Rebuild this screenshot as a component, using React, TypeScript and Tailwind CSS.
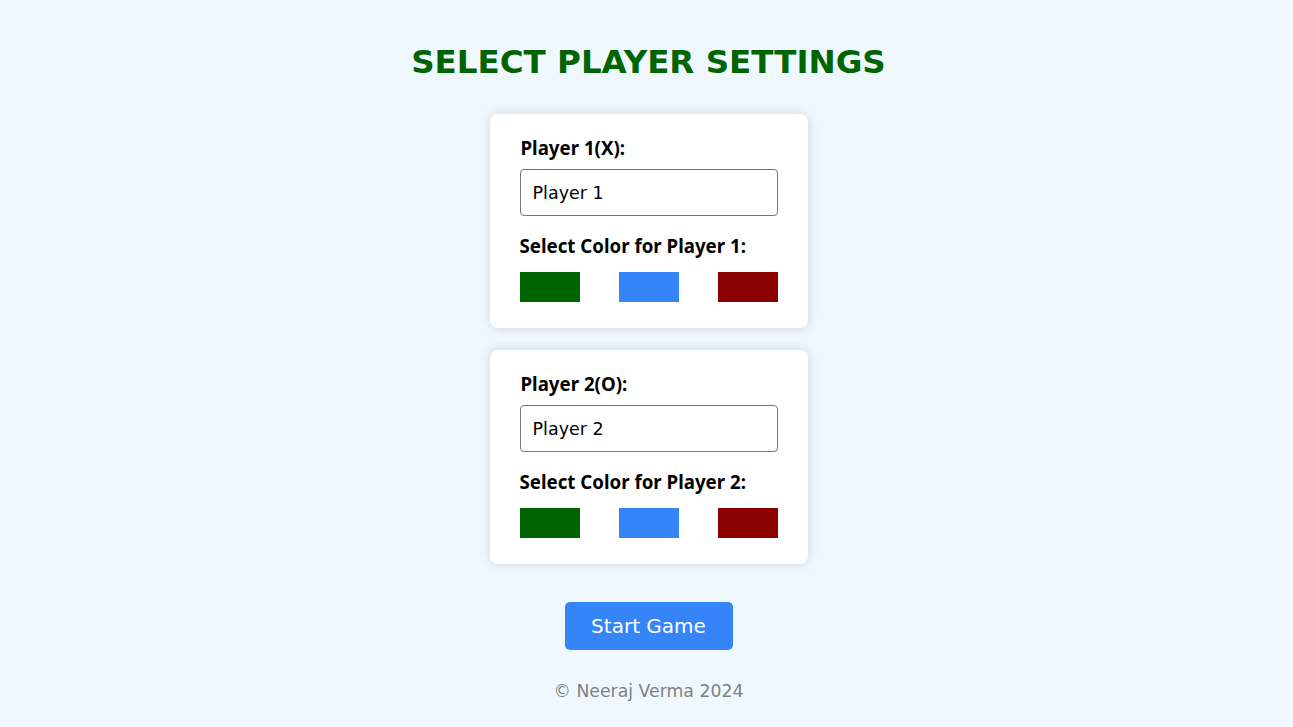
export default function App() {
  const colors = ["#006400", "#3584f8", "#8b0000"];
  const players = [
    { label: "Player 1(X):", value: "Player 1", sel: "Select Color for Player 1:" },
    { label: "Player 2(O):", value: "Player 2", sel: "Select Color for Player 2:" },
  ];
  return (
    <div className="min-h-[727px] w-full bg-[#f0f8ff] flex flex-col items-center pt-[40px] pl-[4px]" style={{ fontFamily: '"DejaVu Sans", sans-serif' }}>
      <h1 className="text-[32.5px] leading-[44px] font-bold text-[#006400]">SELECT PLAYER SETTINGS</h1>
      <div className="mt-[30px] flex flex-col gap-[22px]">
        {players.map((p) => (
          <div key={p.label} className="w-[318px] h-[214px] bg-white rounded-[8px] shadow-[0_0_12px_rgba(0,0,0,0.14)] px-[30px] pt-[20px]">
            <div className="text-[18.7px] leading-[27px] font-bold text-black pl-[1px]" style={{ fontFamily: '"Noto Sans", sans-serif' }}>{p.label}</div>
            <div className="mt-[8px] h-[47px] w-[258px] border border-[#767676] rounded-[4px] flex items-center px-[12px] pt-[2px] text-[17.5px] text-black">{p.value}</div>
            <div className="mt-[16px] text-[18.7px] leading-[27px] font-bold text-black" style={{ fontFamily: '"Noto Sans", sans-serif' }}>{p.sel}</div>
            <div className="mt-[13px] flex justify-between">
              {colors.map((c) => (
                <div key={c} className="w-[60px] h-[30px]" style={{ backgroundColor: c }} />
              ))}
            </div>
          </div>
        ))}
      </div>
      <button className="mt-[38px] w-[168px] h-[48px] rounded-[5px] bg-[#3584f8] text-white text-[20px]">Start Game</button>
      <div className="mt-[28px] text-[17.3px] text-[#808080] pt-[1px]">© Neeraj Verma 2024</div>
    </div>
  );
}
